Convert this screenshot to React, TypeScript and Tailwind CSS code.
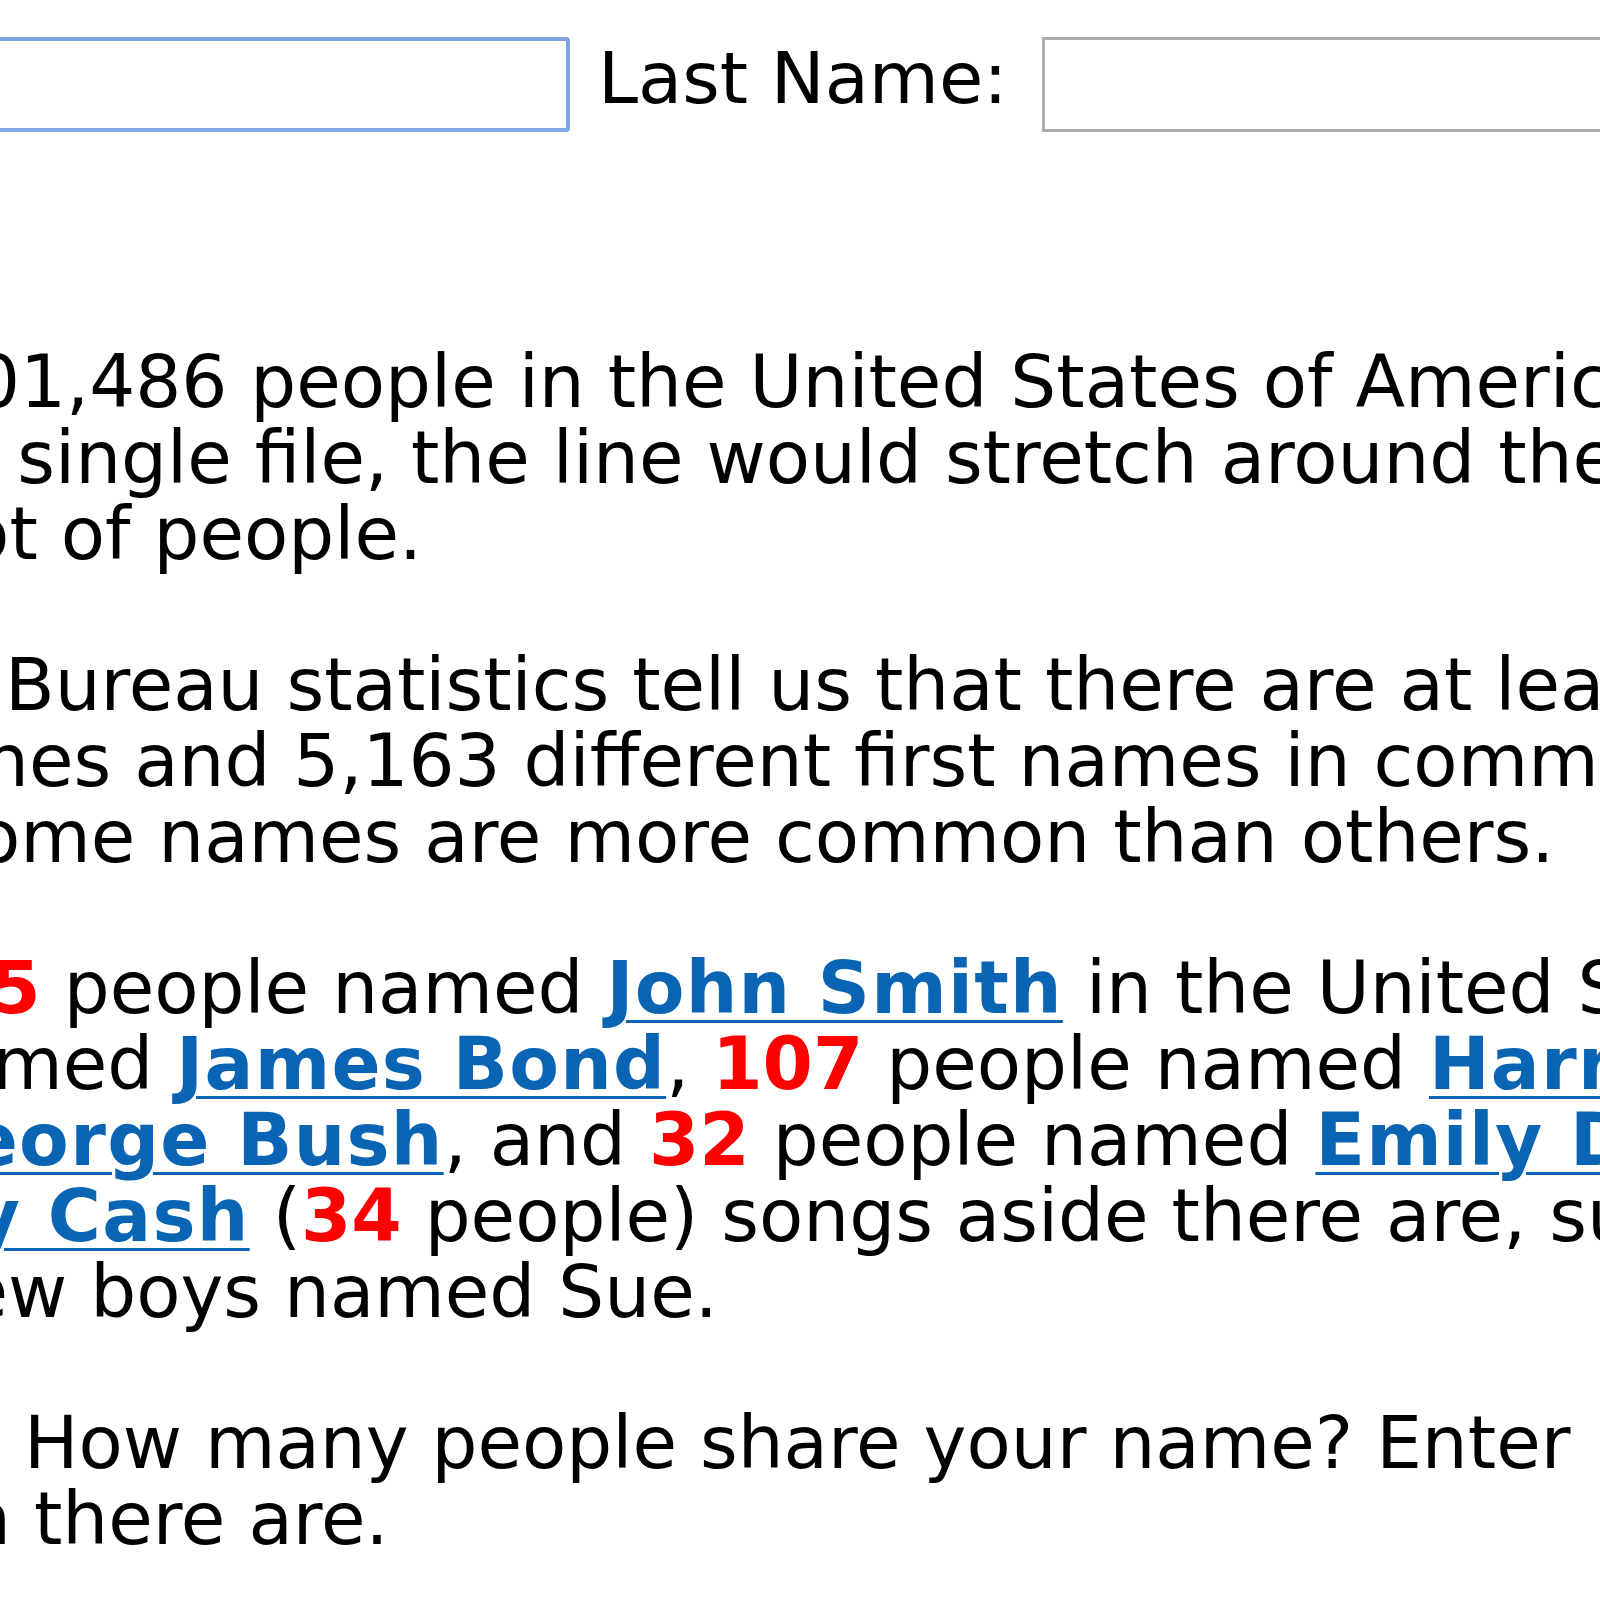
const lineCls = 'block whitespace-nowrap';

const Num = ({ children }: { children: React.ReactNode }) => (
  <b className="font-bold text-[#ff0000]">{children}</b>
);

const NameLink = ({ children }: { children: React.ReactNode }) => (
  <a
    href="#"
    className="font-bold tracking-[1.3px] text-[#0a64b4] underline decoration-[3px] underline-offset-[7px]"
  >
    {children}
  </a>
);

export default function App() {
  return (
    <div className="w-[1600px] h-[1600px] overflow-hidden bg-white text-black font-['DejaVu_Sans',sans-serif] text-[72.4px]">
      {/* Search form */}
      <form className="flex items-start pt-[37px]">
        <input
          type="text"
          aria-label="First Name"
          className="ml-[-120px] w-[690px] h-[95px] shrink-0 rounded-[4px] border-[4px] border-[#7ea6e6] bg-white outline-none"
        />
        <label className="ml-[28px] mt-[3px] text-[72px] leading-[76px] whitespace-nowrap">Last Name:</label>
        <input
          type="text"
          aria-label="Last Name"
          className="ml-[34px] w-[700px] h-[95px] shrink-0 border-[3px] border-[#ababab] bg-white outline-none"
        />
      </form>

      {/* Intro copy */}
      <div className="mt-[213px] leading-[75.8px]">
        <p className="mb-[75.8px]">
          <span className={`${lineCls} ml-[-26px]`}>01,486 people in the United States of America. If we all</span>
          <span className={`${lineCls} ml-[-50px]`}>a single file, the line would stretch around the earth</span>
          <span className={`${lineCls} ml-[-55px]`}>lot of people.</span>
        </p>

        <p className="mb-[75.8px]">
          <span className={`${lineCls} ml-[5px]`}>Bureau statistics tell us that there are at least 151,671</span>
          <span className={`${lineCls} ml-[-17px]`}>nes and 5,163 different first names in common use in</span>
          <span className={`${lineCls} ml-[-70px]`}>Some names are more common than others.</span>
        </p>

        <p className="mb-[75.8px]">
          <span className={`${lineCls} ml-[-60px]`}>
            <Num>85</Num> people named <NameLink>John Smith</NameLink> in the United States.
          </span>
          <span className={`${lineCls} ml-[-98px]`}>
            named <NameLink>James Bond</NameLink>, <Num>107</Num> people named <NameLink>Harry Potter</NameLink>,
          </span>
          <span className={`${lineCls} ml-[-92px]`}>
            <NameLink>George Bush</NameLink>, and <Num>32</Num> people named <NameLink>Emily Dickinson</NameLink>.
          </span>
          <span className={`${lineCls} ml-[-80px]`}>
            <NameLink>ny Cash</NameLink> (<Num>34</Num> people) songs aside there are, surely, a
          </span>
          <span className={`${lineCls} ml-[-62px]`}>few boys named Sue.</span>
        </p>

        <p>
          <span className={`${lineCls} ml-[24px]`}>How many people share your name? Enter</span>
          <span className={`${lineCls} ml-[-35px]`}>n there are.</span>
        </p>
      </div>
    </div>
  );
}
